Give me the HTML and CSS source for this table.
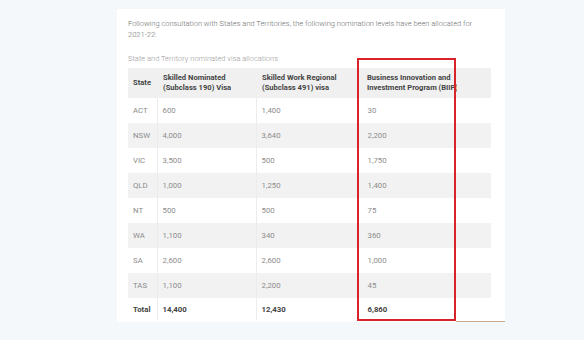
FILE: index.html
```html
<!DOCTYPE html>
<html>
<head>
<meta charset="utf-8">
<link rel="stylesheet" href="styles.css">
</head>
<body>
<div class="page">
  <div class="card">
    <p class="intro">Following consultation with States and Territories, the following nomination levels have been allocated for<br>2021-22:</p>
    <p class="caption">State and Territory nominated visa allocations</p>
    <table class="alloc">
      <thead>
        <tr>
          <th class="c1">State</th>
          <th class="c2">Skilled Nominated<br>(Subclass 190) Visa</th>
          <th class="c3">Skilled Work Regional<br>(Subclass 491) visa</th>
          <th class="c4"><span class="clip">Business Innovation and<br>Investment Program (BIIP)</span></th>
        </tr>
      </thead>
      <tbody>
        <tr><td>ACT</td><td>600</td><td>1,400</td><td>30</td></tr>
        <tr><td>NSW</td><td>4,000</td><td>3,640</td><td>2,200</td></tr>
        <tr><td>VIC</td><td>3,500</td><td>500</td><td>1,750</td></tr>
        <tr><td>QLD</td><td>1,000</td><td>1,250</td><td>1,400</td></tr>
        <tr><td>NT</td><td>500</td><td>500</td><td>75</td></tr>
        <tr><td>WA</td><td>1,100</td><td>340</td><td>360</td></tr>
        <tr><td>SA</td><td>2,600</td><td>2,600</td><td>1,000</td></tr>
        <tr><td>TAS</td><td>1,100</td><td>2,200</td><td>45</td></tr>
        <tr class="total"><td>Total</td><td>14,400</td><td>12,430</td><td>6,860</td></tr>
      </tbody>
    </table>
    <div class="highlight"></div>
    <div class="underline"></div>
  </div>
</div>
</body>
</html>
```
FILE: styles.css
```css
html, body {
  margin: 0;
  padding: 0;
}
body {
  background: #f5f8fb;
  font-family: Roboto, "Liberation Sans", sans-serif;
  width: 584px;
  height: 340px;
  overflow: hidden;
}
.page {
  padding: 9px 0 0 117px;
}
.card {
  position: relative;
  width: 388px;
  height: 313px;
  background: #ffffff;
  box-sizing: border-box;
  padding: 10px 14px 0 11px;
  overflow: hidden;
}
.intro {
  margin: 0;
  font-size: 7.5px;
  line-height: 10.5px;
  color: #6f6f6f;
  font-weight: 300;
  white-space: nowrap;
}
.caption {
  margin: 14px 0 0;
  font-size: 7.5px;
  line-height: 10px;
  color: #9a9a9a;
  font-weight: 300;
}
.alloc {
  margin-top: 4px;
  width: 363px;
  border-collapse: collapse;
  table-layout: fixed;
  font-size: 7.8px;
}
.alloc th,
.alloc td {
  box-sizing: border-box;
}
.alloc .c1 { width: 29px; }
.alloc .c2 { width: 99px; }
.alloc .c3 { width: 102px; }
.alloc .c4 { width: 133px; }
.alloc th {
  background: #f0f0f0;
  color: #444444;
  font-size: 7.6px;
  font-weight: 700;
  text-align: left;
  height: 30px;
  line-height: 10.5px;
  padding: 0 0 0 5px;
  white-space: nowrap;
  overflow: hidden;
}
.alloc th.c2,
.alloc th.c3 {
  padding-left: 6px;
}
.alloc th.c4 {
  padding-left: 9px;
}
.clip {
  display: block;
  width: 90px;
  overflow: hidden;
}
.alloc td {
  height: 25px;
  padding: 0 0 0 5px;
  color: #8c8c8c;
  font-weight: 400;
  border-left: 1px solid #ececec;
}
.alloc td:first-child {
  border-left: 0;
}
.alloc td:nth-child(4) {
  padding-left: 9px;
}
.alloc tbody tr:nth-child(even) td {
  background: #f2f2f2;
}
.alloc tr.total td {
  height: 22px;
  color: #444444;
  font-weight: 700;
}
.highlight {
  position: absolute;
  left: 240px;
  top: 49px;
  width: 99px;
  height: 263px;
  border: 2px solid #d8232a;
  box-sizing: border-box;
}
.underline {
  position: absolute;
  left: 339px;
  right: 0;
  bottom: 0;
  height: 1px;
  background: #c8a886;
}
```
